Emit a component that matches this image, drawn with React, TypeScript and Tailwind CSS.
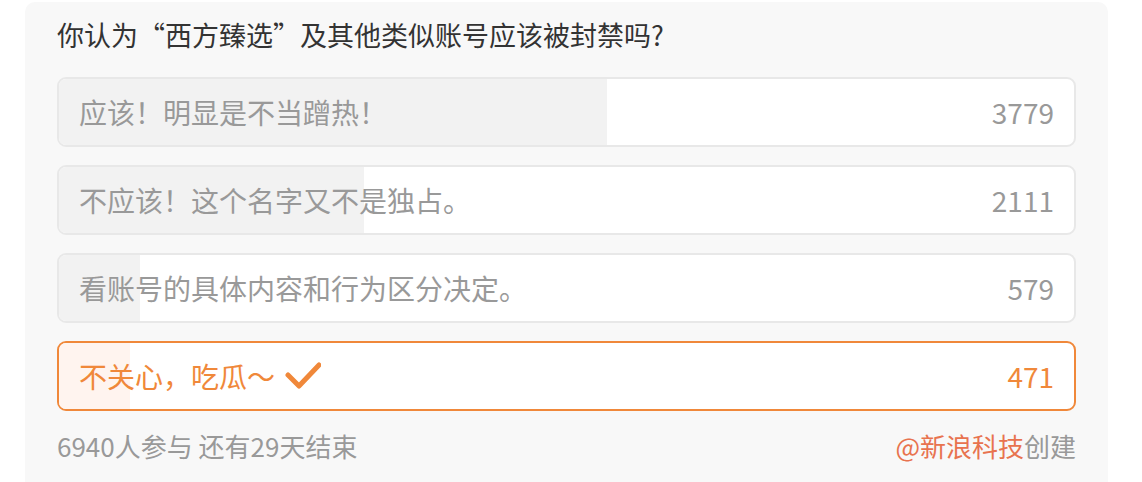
const options = [
  { label: "应该！明显是不当蹭热！", count: 3779 },
  { label: "不应该！这个名字又不是独占。", count: 2111 },
  { label: "看账号的具体内容和行为区分决定。", count: 579 },
  { label: "不关心，吃瓜～", count: 471, selected: true },
];

const total = 6940;

function Check() {
  return (
    <svg width="36" height="28" viewBox="0 0 36 28" className="ml-[10px] shrink-0">
      <path
        d="M3 13 L14 24 L34 3"
        fill="none"
        stroke="#f0883a"
        strokeWidth="5"
        strokeLinecap="round"
        strokeLinejoin="round"
      />
    </svg>
  );
}

export default function App() {
  return (
    <div
      className="w-[1142px] h-[482px] bg-white pt-[2px] pl-[25px] pr-[34px] overflow-hidden"
      style={{ fontFamily: '"Noto Sans CJK SC", "Noto Sans", sans-serif' }}
    >
      <div className="bg-[#f8f8f8] rounded-t-[10px] h-[490px] px-[32px] pt-[15px]">
        <div className="text-[27px] leading-[36px] text-[#333333]">
          你认为“西方臻选”及其他类似账号应该被封禁吗?
        </div>

        <div className="mt-[24px] flex flex-col gap-[18px]">
          {options.map((o) => (
            <div
              key={o.label}
              className={
                o.selected
                  ? "relative h-[70px] rounded-[9px] border-2 border-[#f0883a] bg-white overflow-hidden"
                  : "relative h-[70px] rounded-[9px] border-2 border-[#e8e8e8] bg-white overflow-hidden"
              }
            >
              <div
                className={o.selected ? "absolute inset-y-0 left-0 bg-[#fff4ef]" : "absolute inset-y-0 left-0 bg-[#f2f2f2]"}
                style={{ width: `${Math.round((o.count / total) * 100)}%` }}
              />
              <div
                className={
                  o.selected
                    ? "relative h-full flex items-center justify-between px-[20px] text-[28px] text-[#f0883a]"
                    : "relative h-full flex items-center justify-between px-[20px] text-[28px] text-[#999999]"
                }
              >
                <div className="flex items-center">
                  <span>{o.label}</span>
                  {o.selected && <Check />}
                </div>
                <span>{o.count}</span>
              </div>
            </div>
          ))}
        </div>

        <div className="mt-[19px] flex justify-between text-[26px] leading-[32px] text-[#999999]">
          <span>6940人参与 还有29天结束</span>
          <span>
            <span className="text-[#e8734f]">@新浪科技</span>创建
          </span>
        </div>
      </div>
    </div>
  );
}
